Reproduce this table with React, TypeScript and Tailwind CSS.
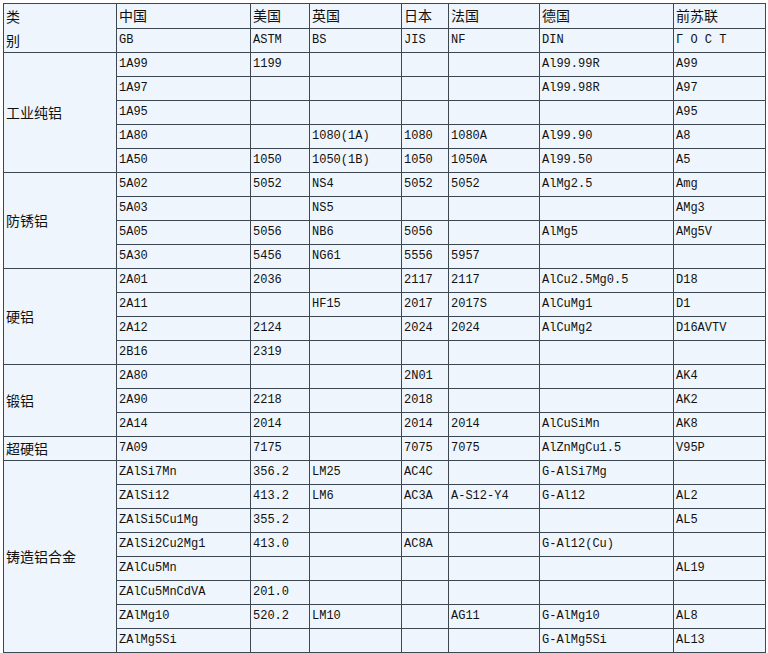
import { FC } from 'react';

type Group = { name: string; rows: string[][] };

const groups: Group[] = [
    {
        name: '工业纯铝',
        rows: [
            ['1A99', '1199', '', '', '', 'Al99.99R', 'A99'],
            ['1A97', '', '', '', '', 'Al99.98R', 'A97'],
            ['1A95', '', '', '', '', '', 'A95'],
            ['1A80', '', '1080(1A)', '1080', '1080A', 'Al99.90', 'A8'],
            ['1A50', '1050', '1050(1B)', '1050', '1050A', 'Al99.50', 'A5'],
        ],
    },
    {
        name: '防锈铝',
        rows: [
            ['5A02', '5052', 'NS4', '5052', '5052', 'AlMg2.5', 'Amg'],
            ['5A03', '', 'NS5', '', '', '', 'AMg3'],
            ['5A05', '5056', 'NB6', '5056', '', 'AlMg5', 'AMg5V'],
            ['5A30', '5456', 'NG61', '5556', '5957', '', ''],
        ],
    },
    {
        name: '硬铝',
        rows: [
            ['2A01', '2036', '', '2117', '2117', 'AlCu2.5Mg0.5', 'D18'],
            ['2A11', '', 'HF15', '2017', '2017S', 'AlCuMg1', 'D1'],
            ['2A12', '2124', '', '2024', '2024', 'AlCuMg2', 'D16AVTV'],
            ['2B16', '2319', '', '', '', '', ''],
        ],
    },
    {
        name: '锻铝',
        rows: [
            ['2A80', '', '', '2N01', '', '', 'AK4'],
            ['2A90', '2218', '', '2018', '', '', 'AK2'],
            ['2A14', '2014', '', '2014', '2014', 'AlCuSiMn', 'AK8'],
        ],
    },
    {
        name: '超硬铝',
        rows: [['7A09', '7175', '', '7075', '7075', 'AlZnMgCu1.5', 'V95P']],
    },
    {
        name: '铸造铝合金',
        rows: [
            ['ZAlSi7Mn', '356.2', 'LM25', 'AC4C', '', 'G-AlSi7Mg', ''],
            ['ZAlSi12', '413.2', 'LM6', 'AC3A', 'A-S12-Y4', 'G-Al12', 'AL2'],
            ['ZAlSi5Cu1Mg', '355.2', '', '', '', '', 'AL5'],
            ['ZAlSi2Cu2Mg1', '413.0', '', 'AC8A', '', 'G-Al12(Cu)', ''],
            ['ZAlCu5Mn', '', '', '', '', '', 'AL19'],
            ['ZAlCu5MnCdVA', '201.0', '', '', '', '', ''],
            ['ZAlMg10', '520.2', 'LM10', '', 'AG11', 'G-AlMg10', 'AL8'],
            ['ZAlMg5Si', '', '', '', '', 'G-AlMg5Si', 'AL13'],
        ],
    },
];

const countries = ['中国', '美国', '英国', '日本', '法国', '德国', '前苏联'];
const standards = ['GB', 'ASTM', 'BS', 'JIS', 'NF', 'DIN', 'Г О С Т'];
const widths = ['w-[113px]', 'w-[134px]', 'w-[59px]', 'w-[92px]', 'w-[47px]', 'w-[91px]', 'w-[134px]', 'w-[92px]'];

const cjk = "text-[14px] font-['Noto_Sans_CJK_SC',sans-serif]";
const mono = "text-[12px] font-['Liberation_Mono','Noto_Sans_CJK_SC',monospace]";
const cell = 'border border-[#3d4752] px-[2px] py-0 text-left align-middle text-[#111] whitespace-nowrap';

export const App: FC = () =>
{
    return (
        <div className="bg-white pl-[3px] pt-[3px]">
            <table className="w-[763px] table-fixed border-collapse bg-[#eef5fc] leading-[23px]">
                <colgroup>
                    { widths.map((w, i) => <col key={ i } className={ w } />) }
                </colgroup>
                <tbody>
                    { /* Header */ }
                    <tr className="h-[24px]">
                        <td rowSpan={ 2 } className={ `${ cell } ${ cjk } align-top leading-[24px]` }>类<br />别</td>
                        { countries.map(c => <td key={ c } className={ `${ cell } ${ cjk }` }>{ c }</td>) }
                    </tr>
                    <tr className="h-[24px]">
                        { standards.map(s => <td key={ s } className={ `${ cell } ${ mono }` }>{ s }</td>) }
                    </tr>

                    { /* Body */ }
                    { groups.map(g => g.rows.map((r, i) => (
                        <tr key={ g.name + i } className="h-[24px]">
                            { i === 0 && <td rowSpan={ g.rows.length } className={ `${ cell } ${ cjk }` }>{ g.name }</td> }
                            { r.map((v, j) => <td key={ j } className={ `${ cell } ${ mono }` }>{ v }</td>) }
                        </tr>
                    ))) }
                </tbody>
            </table>
        </div>
    );
};

export default App;
